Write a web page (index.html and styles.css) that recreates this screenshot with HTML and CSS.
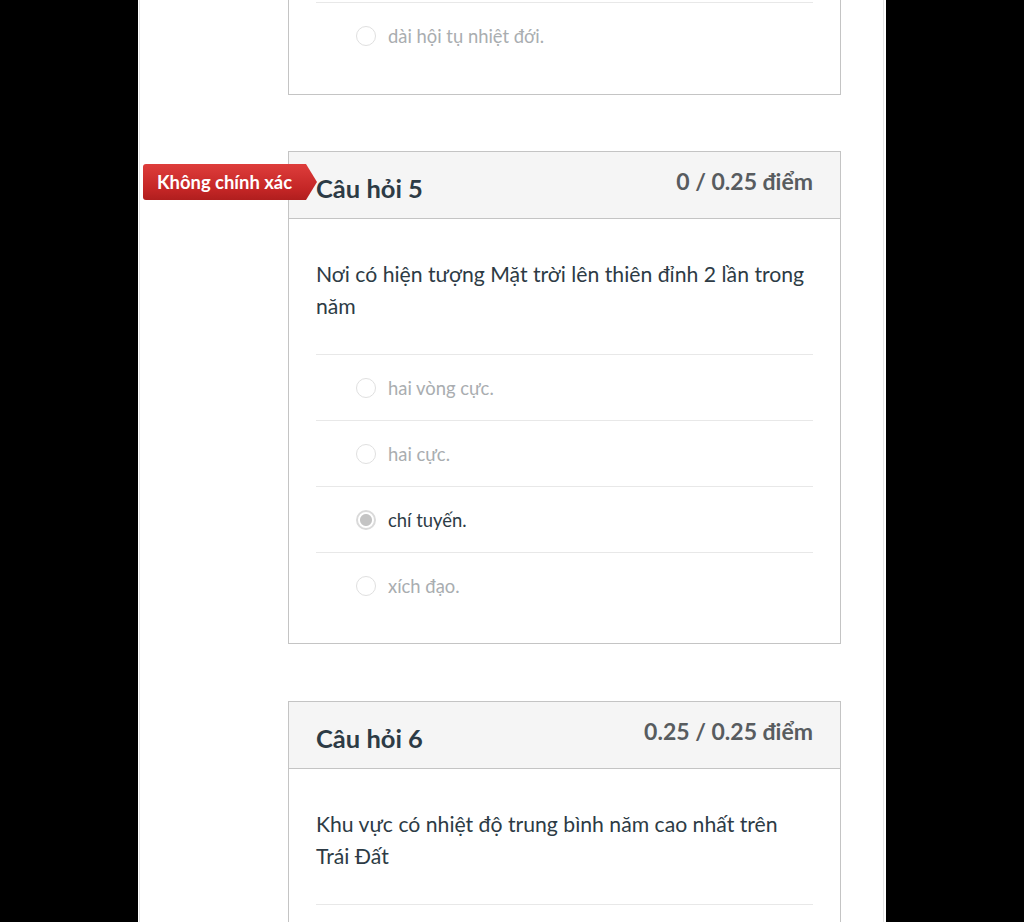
FILE: index.html
```html
<!DOCTYPE html>
<html lang="vi">
<head>
<meta charset="utf-8">
<title>Kết quả bài kiểm tra</title>
<link rel="stylesheet" href="styles.css">
</head>
<body>
<div class="page">
  <div class="page-inner">
    <div class="questions">

      <div class="card card-tail">
        <div class="answers">
          <div class="answer">
            <span class="radio"></span>
            <span class="answer-text">dài hội tụ nhiệt đới.</span>
          </div>
        </div>
      </div>

      <div class="card">
        <div class="badge">Không chính xác</div>
        <div class="card-header">
          <h2 class="q-title">Câu hỏi 5</h2>
          <div class="q-score">0 / 0.25 điểm</div>
        </div>
        <div class="card-body">
          <p class="q-text">Nơi có hiện tượng Mặt trời lên thiên đỉnh 2 lần trong năm</p>
          <div class="answers">
            <div class="answer">
              <span class="radio"></span>
              <span class="answer-text">hai vòng cực.</span>
            </div>
            <div class="answer">
              <span class="radio"></span>
              <span class="answer-text">hai cực.</span>
            </div>
            <div class="answer selected">
              <span class="radio"></span>
              <span class="answer-text">chí tuyến.</span>
            </div>
            <div class="answer">
              <span class="radio"></span>
              <span class="answer-text">xích đạo.</span>
            </div>
          </div>
        </div>
      </div>

      <div class="card card-next">
        <div class="card-header">
          <h2 class="q-title">Câu hỏi 6</h2>
          <div class="q-score">0.25 / 0.25 điểm</div>
        </div>
        <div class="card-body">
          <p class="q-text">Khu vực có nhiệt độ trung bình năm cao nhất trên Trái Đất</p>
          <div class="answers">
            <div class="answer">
              <span class="radio"></span>
              <span class="answer-text">xích đạo.</span>
            </div>
          </div>
        </div>
      </div>

    </div>
  </div>
</div>
</body>
</html>
```

FILE: styles.css
```css
* {
  box-sizing: border-box;
}

html, body {
  margin: 0;
  padding: 0;
  background: #000;
  height: 100%;
  overflow: hidden;
}

body {
  font-family: Lato, "Noto Sans", "Liberation Sans", sans-serif;
  color: #2d3b45;
}

.page {
  width: 748px;
  margin: 0 auto;
  min-height: 100vh;
  background: #fff;
  padding: 0 2px 0 1px;
  display: flex;
}

.page-inner {
  flex: 1;
  border-left: 1px solid #e4e4e4;
  border-right: 1px solid #e4e4e4;
}

.questions {
  margin-left: 148px;
  width: 553px;
  display: flex;
  flex-direction: column;
  gap: 56px;
}

.card {
  position: relative;
  border: 1px solid #c4c4c4;
  background: #fff;
}

.card-next {
  margin-top: 1px;
}

.card-tail {
  border-top: none;
  padding: 2px 27px 26px;
}

.card-header {
  height: 67px;
  background: #f5f5f5;
  border-bottom: 1px solid #c4c4c4;
  padding: 0 27px;
  display: flex;
  justify-content: space-between;
  align-items: flex-start;
}

.q-title {
  margin: 20px 0 0;
  font-size: 25.5px;
  line-height: 32px;
  font-weight: 700;
  color: #2d3b45;
}

.q-score {
  margin-top: 15px;
  font-size: 23px;
  line-height: 28px;
  font-weight: 700;
  color: #585c5f;
}

.card-body {
  padding: 39px 27px 25px;
}

.q-text {
  margin: 0 0 32px;
  font-size: 21.2px;
  line-height: 32px;
  color: #2d3b45;
}

.answer {
  height: 66px;
  border-top: 1px solid #e8e8e8;
  display: flex;
  align-items: center;
  padding-left: 40px;
  gap: 12px;
}

.radio {
  width: 20px;
  height: 20px;
  border-radius: 50%;
  border: 1px solid #e0e0e0;
  background: #fff;
  flex: none;
}

.answer-text {
  font-size: 18.4px;
  color: #a9adb0;
}

.answer.selected .radio {
  border: 2px solid #dadada;
  background: radial-gradient(circle, #c4c4c4 0 5.5px, #fff 6.5px);
}

.answer.selected .answer-text {
  color: #2d3b45;
}

.badge {
  position: absolute;
  left: -146px;
  top: 12px;
  width: 174px;
  height: 36px;
  padding-left: 14px;
  display: flex;
  align-items: center;
  font-size: 18.4px;
  font-weight: 700;
  color: #fff;
  background: linear-gradient(#de3d3b, #c42626 70%, #b01e1e);
  border-radius: 3px;
  clip-path: polygon(0 0, 163px 0, 100% 50%, 163px 100%, 0 100%);
  z-index: 2;
}
```
